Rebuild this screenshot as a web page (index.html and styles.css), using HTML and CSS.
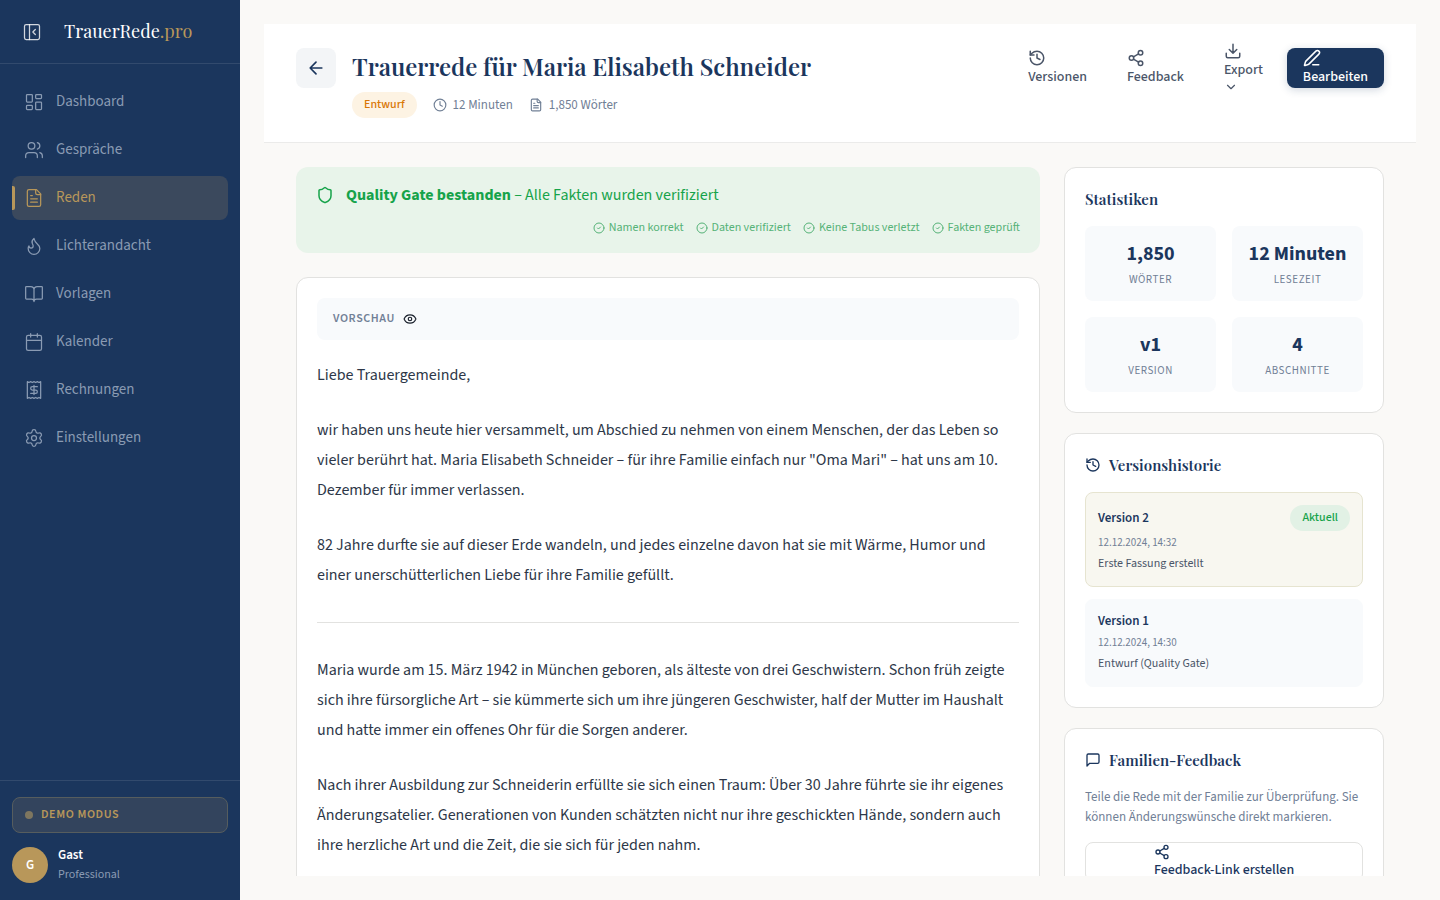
FILE: index.html
```html
<!DOCTYPE html>
<html lang="de">
<head>
<meta charset="utf-8">
<meta name="viewport" content="width=device-width, initial-scale=1">
<title>TrauerRede.pro – Trauerrede für Maria Elisabeth Schneider</title>
<link rel="stylesheet" href="styles.css">
</head>
<body>
<svg class="sprite" aria-hidden="true">
  <symbol id="i-panel" viewBox="0 0 24 24"><rect x="3" y="3" width="18" height="18" rx="2"/><path d="M9 3v18M16 15l-3-3 3-3"/></symbol>
  <symbol id="i-dashboard" viewBox="0 0 24 24"><rect x="3" y="3" width="7" height="9" rx="1"/><rect x="14" y="3" width="7" height="5" rx="1"/><rect x="14" y="12" width="7" height="9" rx="1"/><rect x="3" y="16" width="7" height="5" rx="1"/></symbol>
  <symbol id="i-users" viewBox="0 0 24 24"><path d="M16 21v-2a4 4 0 0 0-4-4H6a4 4 0 0 0-4 4v2M22 21v-2a4 4 0 0 0-3-3.87M16 3.13a4 4 0 0 1 0 7.75"/><circle cx="9" cy="7" r="4"/></symbol>
  <symbol id="i-file" viewBox="0 0 24 24"><path d="M15 2H6a2 2 0 0 0-2 2v16a2 2 0 0 0 2 2h12a2 2 0 0 0 2-2V7Z"/><path d="M14 2v4a2 2 0 0 0 2 2h4M10 9H8M16 13H8M16 17H8"/></symbol>
  <symbol id="i-flame" viewBox="0 0 24 24"><path d="M8.5 14.5A2.5 2.5 0 0 0 11 12c0-1.38-.5-2-1-3-1.072-2.143-.224-4.054 2-6 .5 2.5 2 4.9 4 6.500 2 1.600 3 3.500 3 5.500a7 7 0 1 1-14 0c0-1.153.433-2.294 1-3a2.500 2.500 0 0 0 2.500 2.500z"/></symbol>
  <symbol id="i-book" viewBox="0 0 24 24"><path d="M12 7v14M3 18a1 1 0 0 1-1-1V4a1 1 0 0 1 1-1h5a4 4 0 0 1 4 4 4 4 0 0 1 4-4h5a1 1 0 0 1 1 1v13a1 1 0 0 1-1 1h-6a3 3 0 0 0-3 3 3 3 0 0 0-3-3z"/></symbol>
  <symbol id="i-calendar" viewBox="0 0 24 24"><path d="M8 2v4M16 2v4M3 10h18"/><rect x="3" y="4" width="18" height="18" rx="2"/></symbol>
  <symbol id="i-receipt" viewBox="0 0 24 24"><path d="M4 2v20l2-1 2 1 2-1 2 1 2-1 2 1 2-1 2 1V2l-2 1-2-1-2 1-2-1-2 1-2-1-2 1Z"/><path d="M16 8h-6a2 2 0 1 0 0 4h4a2 2 0 1 1 0 4H8M12 17.500v-11"/></symbol>
  <symbol id="i-settings" viewBox="0 0 24 24"><path d="M9.671 4.136a2.340 2.340 0 0 1 4.659 0 2.340 2.340 0 0 0 3.319 1.915 2.340 2.340 0 0 1 2.330 4.033 2.340 2.340 0 0 0 0 3.831 2.340 2.340 0 0 1-2.330 4.033 2.340 2.340 0 0 0-3.319 1.915 2.340 2.340 0 0 1-4.659 0 2.340 2.340 0 0 0-3.320-1.915 2.340 2.340 0 0 1-2.330-4.033 2.340 2.340 0 0 0 0-3.831A2.340 2.340 0 0 1 6.350 6.051a2.340 2.340 0 0 0 3.319-1.915"/><circle cx="12" cy="12" r="3"/></symbol>
  <symbol id="i-back" viewBox="0 0 24 24"><path d="m12 19-7-7 7-7M19 12H5"/></symbol>
  <symbol id="i-clock" viewBox="0 0 24 24"><circle cx="12" cy="12" r="10"/><path d="M12 6v6l4 2"/></symbol>
  <symbol id="i-history" viewBox="0 0 24 24"><path d="M3 12a9 9 0 1 0 9-9 9.750 9.750 0 0 0-6.740 2.740L3 8"/><path d="M3 3v5h5M12 7v5l4 2"/></symbol>
  <symbol id="i-share" viewBox="0 0 24 24"><circle cx="18" cy="5" r="3"/><circle cx="6" cy="12" r="3"/><circle cx="18" cy="19" r="3"/><path d="m8.590 13.510 6.830 3.980M15.410 6.510l-6.820 3.980"/></symbol>
  <symbol id="i-download" viewBox="0 0 24 24"><path d="M12 15V3M21 15v4a2 2 0 0 1-2 2H5a2 2 0 0 1-2-2v-4M7 10l5 5 5-5"/></symbol>
  <symbol id="i-chevron" viewBox="0 0 24 24"><path d="m6 9 6 6 6-6"/></symbol>
  <symbol id="i-pen" viewBox="0 0 24 24"><path d="M13 21h8M21.174 6.812a1 1 0 0 0-3.986-3.987L3.842 16.174a2 2 0 0 0-.5.830l-1.321 4.352a.5.5 0 0 0 .623.622l4.353-1.320a2 2 0 0 0 .830-.497z"/></symbol>
  <symbol id="i-shield" viewBox="0 0 24 24"><path d="M20 13c0 5-3.500 7.500-7.660 8.950a1 1 0 0 1-.670-.010C7.500 20.500 4 18 4 13V6a1 1 0 0 1 1-1c2 0 4.500-1.200 6.240-2.720a1.170 1.170 0 0 1 1.520 0C14.510 3.810 17 5 19 5a1 1 0 0 1 1 1z"/></symbol>
  <symbol id="i-check" viewBox="0 0 24 24"><circle cx="12" cy="12" r="10"/><path d="m9 12 2 2 4-4"/></symbol>
  <symbol id="i-eye" viewBox="0 0 24 24"><path d="M2.062 12.348a1 1 0 0 1 0-.696 10.750 10.750 0 0 1 19.876 0 1 1 0 0 1 0 .696 10.750 10.750 0 0 1-19.876 0"/><circle cx="12" cy="12" r="3"/></symbol>
  <symbol id="i-message" viewBox="0 0 24 24"><path d="M21 15a2 2 0 0 1-2 2H7l-4 4V5a2 2 0 0 1 2-2h14a2 2 0 0 1 2 2z"/></symbol>
</svg>

<div class="app">
  <aside class="sidebar">
    <div class="brand">
      <button class="brand-toggle" type="button" aria-label="Seitenleiste einklappen"><svg class="icon icon-20 thin"><use href="#i-panel"/></svg></button>
      <a class="brand-name" href="#">TrauerRede<span class="brand-tld">.pro</span></a>
    </div>
    <nav class="nav">
      <a class="nav-item" href="#"><svg class="icon icon-20 thin"><use href="#i-dashboard"/></svg>Dashboard</a>
      <a class="nav-item" href="#"><svg class="icon icon-20 thin"><use href="#i-users"/></svg>Gespräche</a>
      <a class="nav-item active" href="#" aria-current="page"><svg class="icon icon-20 thin"><use href="#i-file"/></svg>Reden</a>
      <a class="nav-item" href="#"><svg class="icon icon-20 thin"><use href="#i-flame"/></svg>Lichterandacht</a>
      <a class="nav-item" href="#"><svg class="icon icon-20 thin"><use href="#i-book"/></svg>Vorlagen</a>
      <a class="nav-item" href="#"><svg class="icon icon-20 thin"><use href="#i-calendar"/></svg>Kalender</a>
      <a class="nav-item" href="#"><svg class="icon icon-20 thin"><use href="#i-receipt"/></svg>Rechnungen</a>
      <a class="nav-item" href="#"><svg class="icon icon-20 thin"><use href="#i-settings"/></svg>Einstellungen</a>
    </nav>
    <div class="sidebar-footer">
      <div class="demo"><span class="demo-dot"></span>DEMO MODUS</div>
      <div class="user">
        <span class="avatar">G</span>
        <div>
          <div class="user-name">Gast</div>
          <div class="user-plan">Professional</div>
        </div>
      </div>
    </div>
  </aside>

  <main class="main">
    <div class="page">
      <header class="page-header">
        <button class="back" type="button" aria-label="Zurück"><svg class="icon icon-20"><use href="#i-back"/></svg></button>
        <div class="heading">
          <h1 class="title">Trauerrede für Maria Elisabeth Schneider</h1>
          <div class="meta">
            <span class="badge badge-draft">Entwurf</span>
            <span class="meta-item"><svg class="icon icon-14"><use href="#i-clock"/></svg>12 Minuten</span>
            <span class="meta-item"><svg class="icon icon-14"><use href="#i-file"/></svg>1,850 Wörter</span>
          </div>
        </div>
        <div class="actions">
          <button class="btn" type="button"><svg class="icon icon-18"><use href="#i-history"/></svg>Versionen</button>
          <button class="btn" type="button"><svg class="icon icon-18"><use href="#i-share"/></svg>Feedback</button>
          <button class="btn" type="button"><svg class="icon icon-18"><use href="#i-download"/></svg>Export<svg class="icon icon-14"><use href="#i-chevron"/></svg></button>
          <button class="btn btn-primary" type="button"><svg class="icon icon-18"><use href="#i-pen"/></svg>Bearbeiten</button>
        </div>
      </header>

      <div class="content">
        <div class="column">
          <section class="gate">
            <div class="gate-head">
              <svg class="icon icon-18"><use href="#i-shield"/></svg>
              <p class="gate-text"><strong>Quality Gate bestanden</strong> – Alle Fakten wurden verifiziert</p>
            </div>
            <ul class="checks">
              <li class="check"><svg class="icon icon-12"><use href="#i-check"/></svg>Namen korrekt</li>
              <li class="check"><svg class="icon icon-12"><use href="#i-check"/></svg>Daten verifiziert</li>
              <li class="check"><svg class="icon icon-12"><use href="#i-check"/></svg>Keine Tabus verletzt</li>
              <li class="check"><svg class="icon icon-12"><use href="#i-check"/></svg>Fakten geprüft</li>
            </ul>
          </section>

          <article class="card">
            <div class="preview-bar">VORSCHAU<svg class="icon icon-14"><use href="#i-eye"/></svg></div>
            <div class="speech">
              <p>Liebe Trauergemeinde,</p>
              <p>wir haben uns heute hier versammelt, um Abschied zu nehmen von einem Menschen, der das Leben so vieler berührt hat. Maria Elisabeth Schneider – für ihre Familie einfach nur "Oma Mari" – hat uns am 10. Dezember für immer verlassen.</p>
              <p>82 Jahre durfte sie auf dieser Erde wandeln, und jedes einzelne davon hat sie mit Wärme, Humor und einer unerschütterlichen Liebe für ihre Familie gefüllt.</p>
              <hr>
              <p>Maria wurde am 15. März 1942 in München geboren, als älteste von drei Geschwistern. Schon früh zeigte sich ihre fürsorgliche Art – sie kümmerte sich um ihre jüngeren Geschwister, half der Mutter im Haushalt und hatte immer ein offenes Ohr für die Sorgen anderer.</p>
              <p>Nach ihrer Ausbildung zur Schneiderin erfüllte sie sich einen Traum: Über 30 Jahre führte sie ihr eigenes Änderungsatelier. Generationen von Kunden schätzten nicht nur ihre geschickten Hände, sondern auch ihre herzliche Art und die Zeit, die sie sich für jeden nahm.</p>
            </div>
          </article>
        </div>

        <div class="side">
          <section class="card">
            <h2 class="card-title">Statistiken</h2>
            <div class="stats">
              <div class="stat"><div class="stat-value">1,850</div><div class="stat-label">WÖRTER</div></div>
              <div class="stat"><div class="stat-value">12 Minuten</div><div class="stat-label">LESEZEIT</div></div>
              <div class="stat"><div class="stat-value">v1</div><div class="stat-label">VERSION</div></div>
              <div class="stat"><div class="stat-value">4</div><div class="stat-label">ABSCHNITTE</div></div>
            </div>
          </section>

          <section class="card">
            <h2 class="card-title"><svg class="icon icon-16"><use href="#i-history"/></svg>Versionshistorie</h2>
            <div class="versions">
              <div class="version current">
                <div class="version-head"><span class="version-name">Version 2</span><span class="badge badge-current">Aktuell</span></div>
                <div class="version-date">12.12.2024, 14:32</div>
                <div class="version-note">Erste Fassung erstellt</div>
              </div>
              <div class="version">
                <div class="version-head"><span class="version-name">Version 1</span></div>
                <div class="version-date">12.12.2024, 14:30</div>
                <div class="version-note">Entwurf (Quality Gate)</div>
              </div>
            </div>
          </section>

          <section class="card">
            <h2 class="card-title"><svg class="icon icon-16"><use href="#i-message"/></svg>Familien-Feedback</h2>
            <p class="hint">Teile die Rede mit der Familie zur Überprüfung. Sie können Änderungswünsche direkt markieren.</p>
            <button class="btn-outline" type="button"><span class="btn-stack"><svg class="icon icon-16"><use href="#i-share"/></svg>Feedback-Link erstellen</span></button>
          </section>
        </div>
      </div>
    </div>
  </main>
</div>
</body>
</html>
```
FILE: styles.css
```css
:root {
  --navy: #1b365d;
  --gold: #b8975a;
  --green: #16a34a;
  --ink: #2d3748;
  --slate: #4a5568;
  --muted: #718096;
  --line: #e2e2e0;
  --soft: #f8fafc;
  --sans: "Source Sans 3", "Source Sans Pro", "Noto Sans CJK SC", sans-serif;
  --serif: "Playfair Display", "Liberation Serif", serif;
}

* { box-sizing: border-box; }

body {
  margin: 0;
  font-family: var(--sans);
  font-size: 15px;
  line-height: 20px;
  color: var(--ink);
  background: #faf9f7;
}

h1, h2, p, ul { margin: 0; padding: 0; }
ul { list-style: none; }
a { color: inherit; text-decoration: none; }
button { font: inherit; color: inherit; cursor: pointer; }

.sprite { position: absolute; width: 0; height: 0; }

.icon {
  flex: none;
  fill: none;
  stroke: currentColor;
  stroke-width: 2;
  stroke-linecap: round;
  stroke-linejoin: round;
}
.thin { stroke-width: 1.5; }
.icon-12 { width: 12px; height: 12px; }
.icon-14 { width: 14px; height: 14px; }
.icon-16 { width: 16px; height: 16px; }
.icon-18 { width: 18px; height: 18px; }
.icon-20 { width: 20px; height: 20px; }

.app { display: flex; height: 100vh; }

/* Sidebar */
.sidebar {
  flex: none;
  display: flex;
  flex-direction: column;
  width: 240px;
  color: #fff;
  background: var(--navy);
}
.brand {
  display: flex;
  align-items: center;
  gap: 12px;
  height: 64px;
  padding: 0 12px;
  border-bottom: 1px solid rgba(255, 255, 255, 0.1);
}
.brand-toggle {
  display: grid;
  place-items: center;
  width: 40px;
  height: 40px;
  padding: 0;
  border: 0;
  border-radius: 8px;
  background: none;
  color: rgba(255, 255, 255, 0.8);
}
.brand-name { font-family: var(--serif); font-size: 18px; line-height: 29px; }
.brand-tld { color: var(--gold); }

.nav {
  flex: 1;
  display: flex;
  flex-direction: column;
  gap: 4px;
  padding: 16px 12px;
}
.nav-item {
  position: relative;
  display: flex;
  align-items: center;
  gap: 12px;
  height: 44px;
  padding: 0 12px;
  border-radius: 8px;
  color: #8a9bb3;
}
.nav-item.active { color: var(--gold); background: #3b495d; }
.nav-item.active::before {
  content: "";
  position: absolute;
  left: 0;
  top: 10px;
  width: 3px;
  height: 24px;
  border-radius: 0 2px 2px 0;
  background: var(--gold);
}

.sidebar-footer { padding: 16px 12px; border-top: 1px solid rgba(255, 255, 255, 0.1); }
.demo {
  display: flex;
  align-items: center;
  gap: 8px;
  height: 36px;
  margin-bottom: 13px;
  padding: 0 12px;
  border: 1px solid #565d5e;
  border-radius: 8px;
  background: #33445d;
  color: var(--gold);
  font-size: 12px;
  font-weight: 600;
  letter-spacing: 0.05em;
}
.demo-dot { width: 8px; height: 8px; border-radius: 50%; background: #7e765f; }
.user { display: flex; align-items: center; gap: 10px; }
.avatar {
  display: grid;
  place-items: center;
  width: 36px;
  height: 36px;
  border-radius: 50%;
  background: var(--gold);
  font-size: 13px;
  line-height: 21px;
  font-weight: 600;
}
.user-name { font-size: 13px; line-height: 19px; font-weight: 600; }
.user-plan { font-size: 12px; line-height: 19px; color: #8a9bb3; }

/* Page */
.main { flex: 1; min-width: 0; padding: 24px; }
.page { height: 100%; overflow: hidden; }
.page-header {
  display: flex;
  align-items: flex-start;
  gap: 16px;
  padding: 24px 32px;
  border-bottom: 1px solid #ebebea;
  background: #fff;
}
.back {
  display: grid;
  place-items: center;
  width: 40px;
  height: 40px;
  padding: 0;
  border: 0;
  border-radius: 8px;
  background: #f3f5f7;
  color: var(--navy);
}
.heading { flex: 1; min-width: 0; }
.title {
  margin-bottom: 8px;
  font-family: var(--serif);
  font-size: 24px;
  line-height: 36px;
  font-weight: 600;
  color: var(--navy);
}
.meta { display: flex; align-items: center; gap: 16px; font-size: 13px; line-height: 21px; color: var(--muted); }
.meta-item { display: flex; align-items: center; gap: 6px; }
.badge {
  padding: 3px 12px;
  border-radius: 13px;
  font-size: 12px;
  line-height: 20px;
  font-weight: 500;
}
.badge-draft { background: #fdf3e3; color: #d97706; }
.badge-current { background: #e2f1e5; color: var(--green); }

.actions { display: flex; gap: 8px; }
.btn {
  display: flex;
  flex-direction: column;
  align-items: flex-start;
  justify-content: center;
  height: 40px;
  padding: 0 16px;
  border: 0;
  border-radius: 8px;
  background: none;
  color: var(--slate);
  font-size: 14px;
  font-weight: 500;
}
.btn-primary {
  background: var(--navy);
  color: #fff;
  box-shadow: 0 2px 8px rgba(27, 54, 93, 0.2);
}

.content {
  display: grid;
  grid-template-columns: minmax(0, 1fr) 320px;
  gap: 24px;
  padding: 24px 32px;
}
.column { display: flex; flex-direction: column; gap: 24px; }
.side { display: flex; flex-direction: column; gap: 20px; }

.gate {
  display: flex;
  flex-direction: column;
  gap: 11px;
  padding: 16px 20px;
  border-radius: 12px;
  background: #e8f4ea;
  color: var(--green);
}
.gate-head { display: flex; align-items: center; gap: 12px; }
.gate-text { font-size: 16px; line-height: 24px; }
.checks { display: flex; flex-wrap: wrap; justify-content: flex-end; gap: 12px; color: #55b277; }
.check { display: flex; align-items: center; gap: 4px; font-size: 12px; line-height: 19px; }

.card {
  padding: 20px;
  border: 1px solid var(--line);
  border-radius: 12px;
  background: #fff;
}
.preview-bar {
  display: flex;
  align-items: center;
  gap: 8px;
  margin-bottom: 20px;
  padding: 11px 16px;
  border-radius: 8px;
  background: var(--soft);
  font-size: 12px;
  font-weight: 600;
  letter-spacing: 0.05em;
  color: var(--muted);
}
.preview-bar .icon { color: #1a202c; }
.speech { font-size: 16px; line-height: 30px; }
.speech p { margin-bottom: 25px; }
.speech hr { margin: 32px 0; border: 0; border-top: 1px solid var(--line); }

.card-title {
  display: flex;
  align-items: center;
  gap: 8px;
  margin-bottom: 16px;
  font-family: var(--serif);
  font-size: 15px;
  line-height: 22px;
  font-weight: 600;
  color: var(--navy);
}
.stats { display: grid; grid-template-columns: 1fr 1fr; gap: 16px; }
.stat { padding: 12px; border-radius: 8px; background: var(--soft); text-align: center; white-space: nowrap; }
.stat-value { font-size: 20px; line-height: 32px; font-weight: 700; color: var(--navy); }
.stat-label { font-size: 11px; line-height: 19px; letter-spacing: 0.05em; color: var(--muted); }

.versions { display: flex; flex-direction: column; gap: 12px; }
.version {
  padding: 12px;
  border: 1px solid var(--soft);
  border-radius: 8px;
  background: var(--soft);
}
.version.current { border-color: #e6e4d0; background: #f8f7f0; }
.version-head { display: flex; align-items: center; justify-content: space-between; }
.version-name { font-size: 13px; line-height: 19px; font-weight: 600; color: var(--navy); }
.version-date { font-size: 11px; line-height: 23px; color: var(--muted); }
.version-note { font-size: 12px; line-height: 20px; color: var(--slate); }

.hint { margin-bottom: 15px; font-size: 13px; color: var(--muted); }
.btn-outline {
  display: flex;
  align-items: center;
  justify-content: center;
  width: 100%;
  height: 40px;
  padding: 0 16px;
  border: 1px solid var(--line);
  border-radius: 8px;
  background: #fff;
  color: var(--navy);
  font-size: 14px;
  font-weight: 500;
}
.btn-stack { display: flex; flex-direction: column; align-items: flex-start; }
```
